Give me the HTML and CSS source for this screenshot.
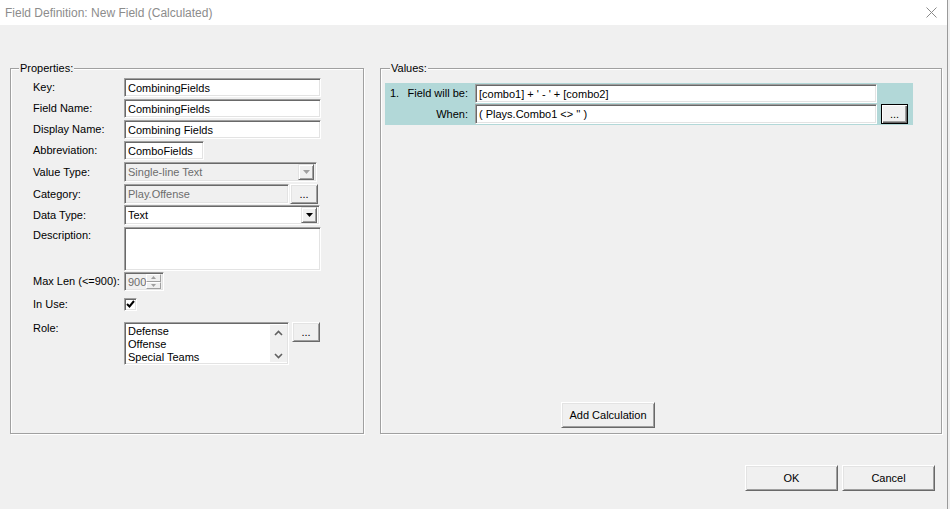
FILE: index.html
```html
<!DOCTYPE html>
<html lang="en">
<head>
    <meta charset="UTF-8">
    <title>Field Definition: New Field (Calculated)</title>
    <link rel="stylesheet" href="styles.css">
</head>
<body>
    <div class="window">
        <div class="titlebar">
            <span class="title">Field Definition: New Field (Calculated)</span>
            <svg class="close" width="11" height="11" viewBox="0 0 11 11">
                <path d="M0.5 0.5 L10.5 10.5 M10.5 0.5 L0.5 10.5" stroke="#8a8a8a" stroke-width="1" fill="none"/>
            </svg>
        </div>

        <div class="content">
            <div class="groups">
                <fieldset class="group props">
                    <legend>Properties:</legend>
                    <div class="props-body">
                        <div class="row r-key">
                            <label>Key:</label>
                            <div class="edit w-197">CombiningFields</div>
                        </div>
                        <div class="row r-std">
                            <label>Field Name:</label>
                            <div class="edit w-197">CombiningFields</div>
                        </div>
                        <div class="row r-std">
                            <label>Display Name:</label>
                            <div class="edit w-197">Combining Fields</div>
                        </div>
                        <div class="row r-std">
                            <label>Abbreviation:</label>
                            <div class="edit w-80">ComboFields</div>
                        </div>
                        <div class="row r-vtype">
                            <label>Value Type:</label>
                            <div class="edit combo disabled w-193">
                                <span class="combo-text">Single-line Text</span>
                                <span class="drop">
                                    <svg width="7" height="4" viewBox="0 0 7 4"><polygon points="0,0 7,0 3.5,4" fill="#a0a0a0"/></svg>
                                </span>
                            </div>
                        </div>
                        <div class="row r-cat">
                            <label>Category:</label>
                            <div class="edit disabled w-165">Play.Offense</div>
                            <button class="btn dots cat-btn">...</button>
                        </div>
                        <div class="row r-dtype">
                            <label>Data Type:</label>
                            <div class="edit combo w-196">
                                <span class="combo-text">Text</span>
                                <span class="drop">
                                    <svg width="7" height="4" viewBox="0 0 7 4"><polygon points="0,0 7,0 3.5,4" fill="#000"/></svg>
                                </span>
                            </div>
                        </div>
                        <div class="row r-desc top">
                            <label class="pad-2">Description:</label>
                            <div class="edit memo w-197"></div>
                        </div>
                        <div class="row r-max">
                            <label>Max Len (&lt;=900):</label>
                            <div class="edit spin disabled">
                                <span class="spin-text">900</span>
                                <span class="spin-arrows">
                                    <span class="spin-btn"><svg width="5" height="3" viewBox="0 0 5 3"><polygon points="0,3 5,3 2.5,0" fill="#a0a0a0"/></svg></span>
                                    <span class="spin-btn"><svg width="5" height="3" viewBox="0 0 5 3"><polygon points="0,0 5,0 2.5,3" fill="#a0a0a0"/></svg></span>
                                </span>
                            </div>
                        </div>
                        <div class="row r-use">
                            <label>In Use:</label>
                            <span class="check">
                                <svg width="9" height="9" viewBox="0 0 9 9"><path d="M1 4 L3.5 6.5 L8 1" stroke="#000" stroke-width="2" fill="none"/></svg>
                            </span>
                        </div>
                        <div class="row r-role top">
                            <label>Role:</label>
                            <div class="edit list">
                                <div class="list-items">
                                    <div>Defense</div>
                                    <div>Offense</div>
                                    <div>Special Teams</div>
                                </div>
                                <div class="list-scroll">
                                    <svg width="9" height="6" viewBox="0 0 9 6"><path d="M1 5 L4.5 1.5 L8 5" stroke="#606060" stroke-width="1.6" fill="none"/></svg>
                                    <svg width="9" height="6" viewBox="0 0 9 6"><path d="M1 1 L4.5 4.5 L8 1" stroke="#606060" stroke-width="1.6" fill="none"/></svg>
                                </div>
                            </div>
                            <button class="btn dots role-btn">...</button>
                        </div>
                    </div>
                </fieldset>

                <fieldset class="group values">
                    <legend>Values:</legend>
                    <div class="calc">
                        <div class="calc-label"><span class="num">1.</span><span>Field will be:</span></div>
                        <div class="edit calc-edit">[combo1] + ' - ' + [combo2]</div>
                        <div></div>
                        <div class="calc-label"><span></span><span>When:</span></div>
                        <div class="edit calc-edit">( Plays.Combo1 &lt;&gt; '' )</div>
                        <button class="btn dots default-btn">...</button>
                    </div>
                    <button class="btn add-btn">Add Calculation</button>
                </fieldset>
            </div>

            <div class="footer">
                <button class="btn dlg-btn">OK</button>
                <button class="btn dlg-btn">Cancel</button>
            </div>
        </div>
    </div>
</body>
</html>
```

FILE: styles.css
```css
body {
    margin: 0;
    background-color: #f0f0f0;
    font-family: 'Liberation Sans', Arial, sans-serif;
    font-size: 11px;
    color: #000;
}

.window {
    width: 947px;
    height: 509px;
    border-right: 1px solid #9a9a9a;
    background-color: #f0f0f0;
}

.titlebar {
    height: 25px;
    background: #fff;
    display: flex;
    align-items: center;
    justify-content: space-between;
    padding: 0 10px 0 5px;
}

.title {
    font-size: 12px;
    color: #8c8c8c;
}

.close {
    display: block;
    margin-top: -1px;
}

.content {
    padding: 37px 0 0 10px;
}

.groups {
    display: flex;
    gap: 16px;
    height: 372px;
}

.group {
    margin: 0;
    padding: 0;
    min-width: 0;
    box-sizing: border-box;
    border: 1px solid #a0a0a0;
    box-shadow: 1px 1px 0 #fff, inset 1px 1px 0 #fff;
}

.group legend {
    margin-left: 8px;
    padding: 0 1px;
    line-height: 13px;
    background-color: #f0f0f0;
}

.props {
    width: 354px;
}

.props-body {
    padding: 3px 0 0 22px;
}

.values {
    width: 562px;
    padding: 8px 0 5px 0;
    display: flex;
    flex-direction: column;
}

.values legend {
    margin-left: 9px;
}

/* property rows */
.row {
    display: flex;
    align-items: center;
}

.row.top {
    align-items: flex-start;
}

.row label {
    width: 91px;
    flex-shrink: 0;
    line-height: 13px;
}

.row label.pad-2 {
    padding-top: 2px;
}

.r-key { height: 19px; }
.r-std { height: 19px; margin-top: 2px; }
.r-vtype { height: 20px; margin-top: 2px; }
.r-cat { height: 20px; margin-top: 2px; }
.r-dtype { height: 20px; margin-top: 1px; }
.r-desc { height: 44px; margin-top: 2px; }
.r-max { height: 19px; margin-top: 1px; }
.r-use { height: 13px; margin-top: 7px; }
.r-role { height: 43px; margin-top: 11px; }

/* sunken edit box */
.edit {
    box-sizing: border-box;
    height: 100%;
    background: #fff;
    border: 1px solid;
    border-color: #a0a0a0 #fff #fff #a0a0a0;
    box-shadow: inset 1px 1px 0 #696969, inset -1px -1px 0 #e3e3e3;
    padding: 0 3px;
    display: flex;
    align-items: center;
    white-space: nowrap;
    overflow: hidden;
}

.edit.disabled {
    background: #f0f0f0;
    color: #6d6d6d;
}

.w-197 { width: 197px; }
.w-196 { width: 196px; }
.w-193 { width: 193px; }
.w-165 { width: 165px; }
.w-80 { width: 80px; }

.combo {
    padding-right: 2px;
    justify-content: space-between;
}

.drop {
    width: 16px;
    height: 16px;
    box-sizing: border-box;
    background: #f0f0f0;
    border: 1px solid;
    border-color: #e3e3e3 #696969 #696969 #e3e3e3;
    box-shadow: inset 1px 1px 0 #fff, inset -1px -1px 0 #a0a0a0;
    display: flex;
    align-items: center;
    justify-content: center;
}

.memo {
    height: 44px;
}

.spin {
    width: 40px;
    padding: 0 2px 0 3px;
    justify-content: space-between;
}

.spin-arrows {
    display: flex;
    flex-direction: column;
    width: 16px;
    height: 15px;
}

.spin-btn {
    flex: 1;
    box-sizing: border-box;
    border: 1px solid;
    border-color: #fff #a0a0a0 #a0a0a0 #fff;
    display: flex;
    align-items: center;
    justify-content: center;
}

.check {
    box-sizing: border-box;
    width: 13px;
    height: 13px;
    background: #fff;
    border: 1px solid;
    border-color: #a0a0a0 #fff #fff #a0a0a0;
    box-shadow: inset 1px 1px 0 #696969, inset -1px -1px 0 #e3e3e3;
    display: flex;
    align-items: center;
    justify-content: center;
}

.list {
    width: 165px;
    height: 43px;
    padding: 2px 2px 2px 3px;
    align-items: stretch;
    justify-content: space-between;
}

.list-items {
    line-height: 13px;
}

.list-scroll {
    width: 17px;
    background: #f0f0f0;
    display: flex;
    flex-direction: column;
    justify-content: space-between;
    align-items: center;
    padding: 5px 0 3px;
    margin-right: -1px;
}

/* raised buttons */
.btn {
    box-sizing: border-box;
    font-family: 'Liberation Sans', Arial, sans-serif;
    font-size: 11px;
    color: #000;
    background: #f0f0f0;
    border: 1px solid;
    border-color: #fff #696969 #696969 #fff;
    box-shadow: inset 1px 1px 0 #e3e3e3, inset -1px -1px 0 #a0a0a0;
    padding: 0;
    cursor: pointer;
}

.dots {
    width: 28px;
    height: 20px;
    line-height: 14px;
}

.cat-btn {
    margin-left: 1px;
}

.role-btn {
    margin-left: 3px;
}

.default-btn {
    width: 27px;
    height: 20px;
    justify-self: end;
    border: 1px solid #000;
    box-shadow: inset 1px 1px 0 #fff, inset -1px -1px 0 #696969, inset -2px -2px 0 #a0a0a0;
}

/* calculation panel */
.calc {
    width: 528px;
    margin-left: 4px;
    box-sizing: border-box;
    background-color: #b2d8d8;
    padding: 1px 5px 1px 0;
    display: grid;
    grid-template-columns: 90px 402px 31px;
    grid-template-rows: 19px 20px;
    row-gap: 1px;
    align-items: center;
}

.calc-label {
    display: flex;
    justify-content: space-between;
    padding: 0 7px 0 5px;
    line-height: 13px;
}

.calc-edit {
    height: 100%;
}

.add-btn {
    margin-top: auto;
    margin-left: 180px;
    width: 94px;
    height: 26px;
    align-self: flex-start;
}

.footer {
    display: flex;
    justify-content: flex-end;
    gap: 4px;
    margin-top: 31px;
    padding-right: 12px;
}

.dlg-btn {
    width: 93px;
    height: 26px;
}
```
